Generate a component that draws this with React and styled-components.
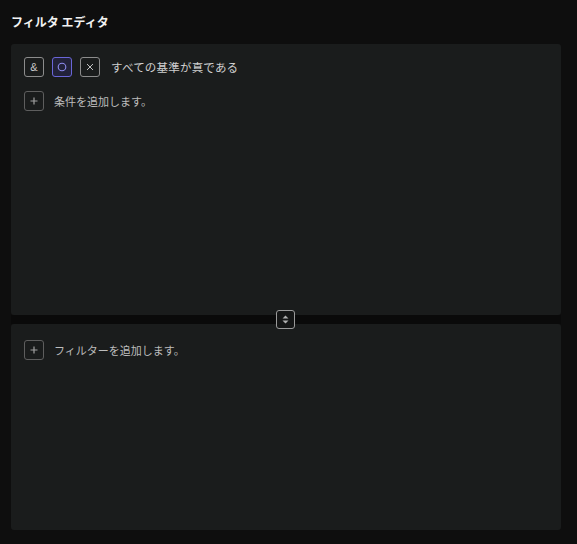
import React from 'react'
import styled, { createGlobalStyle } from 'styled-components'

const Global = createGlobalStyle`
  html, body {
    margin: 0;
    padding: 0;
    background: #0e0e0e;
    font-family: "Noto Sans CJK JP", "Noto Sans", sans-serif;
  }
`;

const Page = styled.div`
  width: 577px;
  height: 544px;
  display: flex;
  flex-direction: column;
  background: #0e0e0e;
`;

const Title = styled.h1`
  margin: 0;
  padding: 13px 11px 0;
  height: 44px;
  box-sizing: border-box;
  font-size: 12px;
  font-weight: 700;
  color: #f2f2f2;
  line-height: 18px;
`;

const Split = styled.div`
  width: 550px;
  margin-left: 11px;
  display: flex;
  flex-direction: column;
`;

const Panel = styled.div`
  height: ${p => p.h}px;
  background: #1a1c1c;
  border-radius: 3px;
  padding: ${p => p.top || 13}px 13px 13px;
  box-sizing: border-box;
  display: flex;
  flex-direction: column;
  gap: 14px;
`;

const Divider = styled.div`
  position: relative;
  height: 9px;
  background: #0a0a0a;
`;

const Handle = styled.button`
  position: absolute;
  left: 265px;
  top: -5px;
  width: 19px;
  height: 19px;
  padding: 0;
  border: 1px solid #9a9a9a;
  border-radius: 3px;
  background: #151616;
  display: flex;
  align-items: center;
  justify-content: center;
`;

const Row = styled.div`
  display: flex;
  align-items: center;
  gap: 8px;
`;

const Box = styled.span`
  width: 20px;
  height: 20px;
  box-sizing: border-box;
  border: 1px solid ${p => (p.active ? '#6a66d8' : '#8c8c8c')};
  background: ${p => (p.active ? '#22223a' : 'transparent')};
  border-radius: 3px;
  display: flex;
  align-items: center;
  justify-content: center;
  color: #c8c8c8;
  font-size: 11px;
  font-family: "Liberation Sans", sans-serif;
`;

const AddBox = styled(Box)`
  border-color: #5e5e5e;
  color: #9a9a9a;
`;

const Label = styled.span`
  margin-left: 3px;
  font-size: 11.5px;
  color: #cfcfcf;
  letter-spacing: 0.2px;
`;

const AddLabel = styled(Label)`
  margin-left: 2px;
  font-size: 11px;
  letter-spacing: 0;
  color: #bdbdbd;
`;

const Plus = () => (
  <svg width="10" height="10" viewBox="0 0 10 10">
    <path d="M5 1.5v7M1.5 5h7" stroke="#a0a0a0" strokeWidth="1.2" />
  </svg>
)

const App = () => {
  return (
    <Page>
      <Global />
      <Title>フィルタ エディタ</Title>
      <Split>
        <Panel h={271}>
          <Row>
            <Box>&amp;</Box>
            <Box active>
              <svg width="10" height="10" viewBox="0 0 10 10">
                <circle cx="5" cy="5" r="3.8" fill="none" stroke="#8e8cf0" strokeWidth="1.1" />
              </svg>
            </Box>
            <Box>
              <svg width="8" height="8" viewBox="0 0 8 8">
                <path d="M1 1l6 6M7 1L1 7" stroke="#c0c0c0" strokeWidth="1" />
              </svg>
            </Box>
            <Label>すべての基準が真である</Label>
          </Row>
          <Row>
            <AddBox><Plus /></AddBox>
            <AddLabel>条件を追加します。</AddLabel>
          </Row>
        </Panel>
        <Divider>
          <Handle>
            <svg width="9" height="11" viewBox="0 0 9 11">
              <path d="M4.5 1.5L7.5 4.5H1.5Z M4.5 9.5L7.5 6.5H1.5Z" fill="#b0b0b0" />
            </svg>
          </Handle>
        </Divider>
        <Panel h={206} top={16}>
          <Row>
            <AddBox><Plus /></AddBox>
            <AddLabel>フィルターを追加します。</AddLabel>
          </Row>
        </Panel>
      </Split>
    </Page>
  )
}

export default App
